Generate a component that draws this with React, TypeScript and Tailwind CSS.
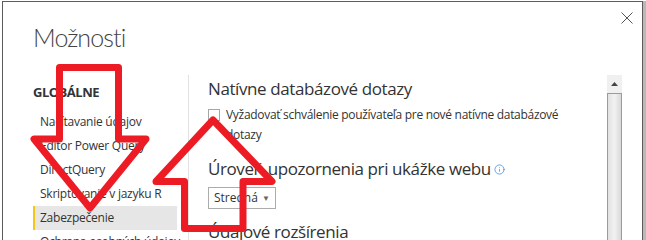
import { Info } from 'lucide-react'

const items = ['Načítavanie údajov', 'Editor Power Query', 'DirectQuery', 'Skriptovanie v jazyku R', 'Zabezpečenie', 'Ochrana osobných údajov']

export default function App() {
  return (
    <div className="relative w-[646px] h-[240px] overflow-hidden bg-white font-['Open_Sans',sans-serif] text-[#333]">
      <div className="pl-[2px] pt-[1px]">
        <div className="w-[641px] h-[300px] border-l border-t border-r border-[#5c5c5c] shadow-[3px_0_0_#b9b9b9] flex flex-col">
          {/* header */}
          <div className="h-[73px] flex justify-between pl-[30px] pr-[9px]">
            <h1 className="pt-[23px] font-['Lato',sans-serif] text-[25px] leading-none font-light tracking-[-0.9px] text-[#444]">Možnosti</h1>
            <button className="mt-[10px] w-[12px] h-[12px] text-[#555]">
              <svg width="12" height="12" viewBox="0 0 12 12">
                <path d="M0.5 0.5 L11.5 11.5 M11.5 0.5 L0.5 11.5" stroke="currentColor" strokeWidth="1" />
              </svg>
            </button>
          </div>

          {/* body */}
          <div className="flex flex-1">
            {/* sidebar */}
            <div className="w-[185px] pl-[30px] pr-[11px]">
              <div className="h-[24px] mt-[6px] mb-[5px] flex items-center text-[13px] font-bold tracking-[-0.5px]">GLOBÁLNE</div>
              <ul className="text-[12px] tracking-[-0.25px] whitespace-nowrap">
                {items.map((it) => (
                  <li
                    key={it}
                    className={
                      it === 'Zabezpečenie'
                        ? 'h-[24px] flex items-center pl-[5px] bg-[#e6e6e6] border-l-2 border-[#f2c811]'
                        : 'h-[24px] flex items-center pl-[7px]'
                    }
                  >
                    {it}
                  </li>
                ))}
              </ul>
            </div>

            {/* content */}
            <div className="flex-1 flex border-l border-[#e1e1e1]">
              <div className="flex-1 pl-[19px] pt-[2px]">
                <h2 className="text-[17px] leading-[24px] tracking-[-0.4px]">Natívne databázové dotazy</h2>
                <div className="mt-[4px] flex items-start gap-[6px]">
                  <span className="mt-[4px] w-[12px] h-[12px] shrink-0 border border-[#a6a6a6] bg-white" />
                  <p className="w-[350px] text-[12px] leading-[20px] tracking-[-0.3px]">
                    Vyžadovať schválenie používateľa pre nové natívne databázové dotazy
                  </p>
                </div>
                <h2 className="mt-[12px] text-[17px] leading-[24px] tracking-[-0.4px] flex items-center gap-[3px]">
                  Úroveň upozornenia pri ukážke webu
                  <Info size={11} strokeWidth={1.6} className="text-[#3c82d6]" />
                </h2>
                <div className="mt-[6px] w-[68px] h-[22px] border border-[#acacac] flex items-center justify-between px-[5px] text-[12px]">
                  <span>Stredná</span>
                  <span className="text-[8px] text-[#666]">▼</span>
                </div>
                <h2 className="mt-[11px] text-[17px] leading-[24px] tracking-[-0.4px]">Údajové rozšírenia</h2>
              </div>

              {/* scrollbar */}
              <div className="w-[15px] mr-[20px] flex flex-col">
                <div className="h-[18px] bg-[#f0f0f0] flex items-center justify-center">
                  <svg width="7" height="4" viewBox="0 0 7 4">
                    <path d="M3.5 0 L7 4 L0 4 Z" fill="#444" />
                  </svg>
                </div>
                <div className="flex-1 border border-[#9b9b9b] bg-gradient-to-r from-[#e2e2e2] via-[#f1f1f1] to-[#d9d9d9]" />
              </div>
            </div>
          </div>
        </div>
      </div>

      {/* red annotation arrows */}
      <svg className="absolute inset-0 pointer-events-none" width="646" height="240" viewBox="0 0 646 240">
        <polygon
          points="59.5,67.5 118.5,67.5 118.5,139 146,139 90,208 34,139 59.5,139"
          fill="none"
          stroke="#ed1c24"
          strokeWidth="7"
          strokeLinejoin="round"
        />
        <polygon
          points="213,120 272,181.5 243,181.5 243,228.5 184.5,228.5 184.5,181.5 156,181.5"
          fill="none"
          stroke="#ed1c24"
          strokeWidth="7"
          strokeLinejoin="round"
        />
      </svg>
    </div>
  )
}
